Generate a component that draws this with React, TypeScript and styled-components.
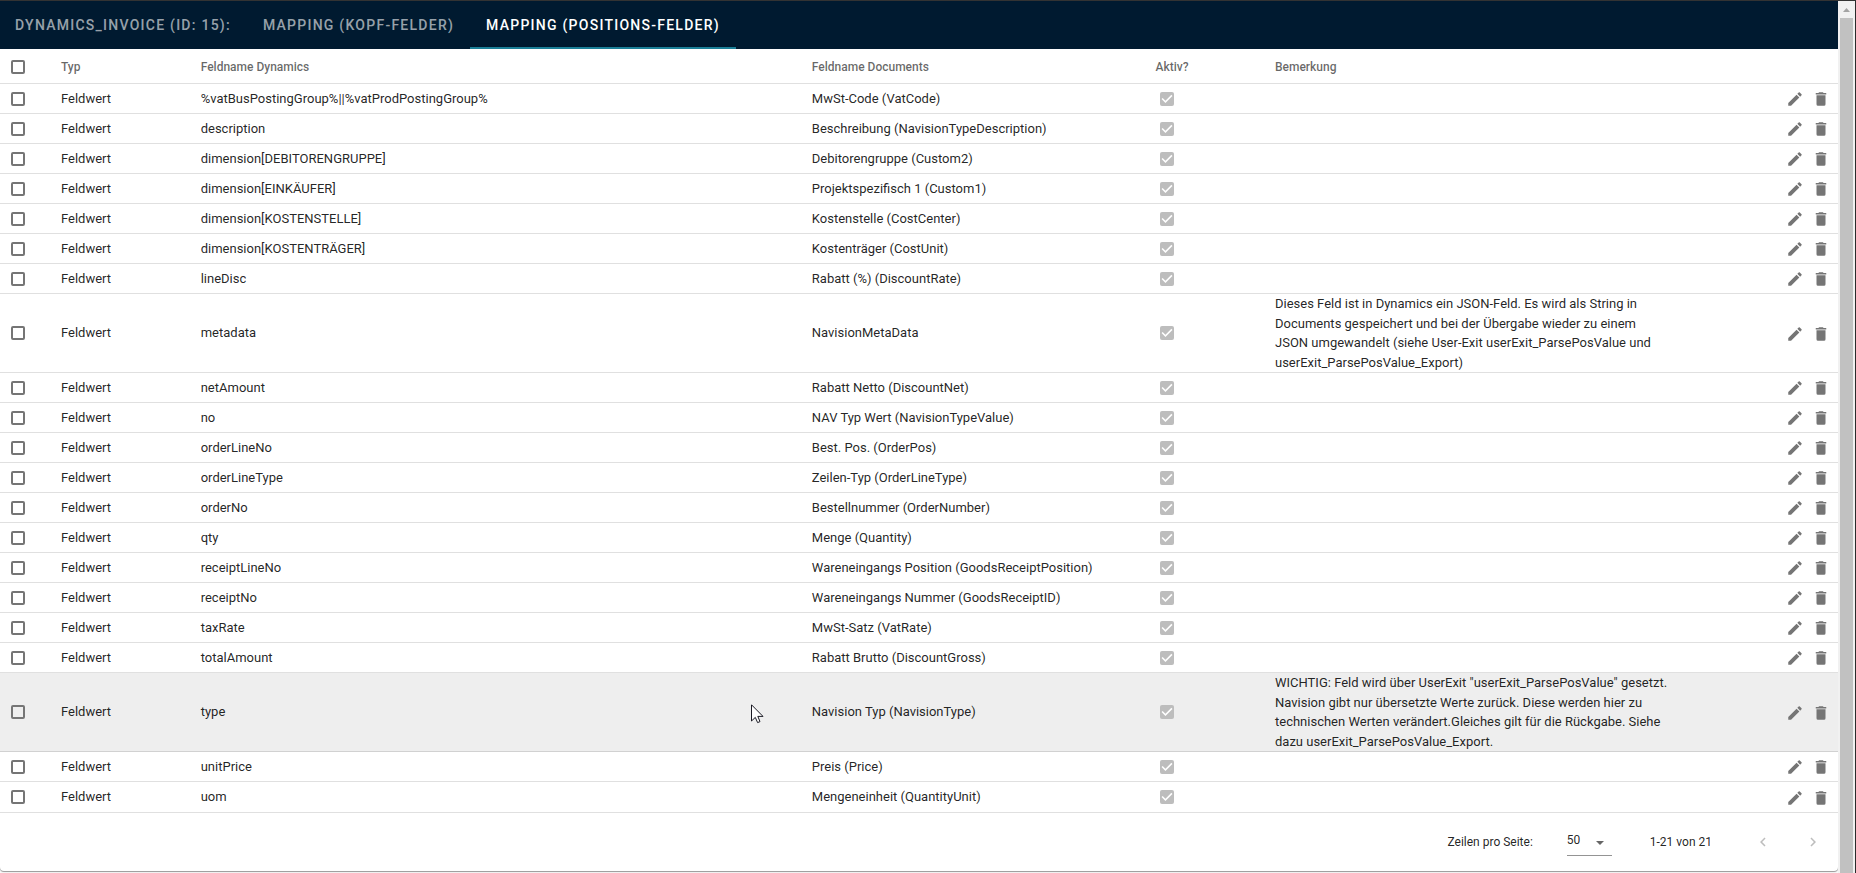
import React from "react";
import styled, { createGlobalStyle } from "styled-components";

const GlobalStyle = createGlobalStyle`
  *, *::before, *::after { box-sizing: border-box; }
  body {
    margin: 0;
    background: #fafafa;
    color: rgba(0, 0, 0, 0.87);
    font-family: Roboto, "Liberation Sans", sans-serif;
    font-size: 13px;
    line-height: 1.5;
  }
`;

const Frame = styled.div`
  display: flex;
  min-height: 100vh;
  border-top: 1px solid #333;
  border-right: 1px solid #2b2b2b;
`;

const Main = styled.main`
  flex: 1;
  min-width: 0;
  padding-bottom: 2px;
`;

const Card = styled.section`
  background: #fff;
  border-radius: 0 0 4px 4px;
  box-shadow: 0 1px 1px rgba(0, 0, 0, 0.4);
`;

const TabBar = styled.nav`
  display: flex;
  height: 48px;
  background: #001a30;
`;

const Tab = styled.button<{ $active?: boolean }>`
  height: 48px;
  padding: 0 16px;
  border: 0;
  background: none;
  box-shadow: ${(p) => (p.$active ? "inset 0 -2px #1b8098" : "none")};
  color: ${(p) => (p.$active ? "#fff" : "rgba(255, 255, 255, 0.6)")};
  font: 500 14px/20px Roboto, "Liberation Sans", sans-serif;
  letter-spacing: 0.0892857em;
  text-transform: uppercase;
  white-space: nowrap;

  &:first-child {
    padding-left: 15px;
  }
`;

const Table = styled.table`
  width: 100%;
  table-layout: fixed;
  border-collapse: separate;
  border-spacing: 0;
`;

const Col = styled.col<{ $width?: string }>`
  width: ${(p) => p.$width ?? "auto"};
`;

const HeadCell = styled.th`
  height: 35px;
  padding: 2px 16px 0;
  border-bottom: 1px solid #e0e0e0;
  color: rgba(0, 0, 0, 0.6);
  font-size: 12px;
  font-weight: 500;
  text-align: left;
`;

const HeadCheckCell = styled(HeadCell)`
  padding: 2px 0 0 11px;
`;

const Row = styled.tr<{ $hovered?: boolean }>`
  background: ${(p) => (p.$hovered ? "#eee" : "transparent")};
`;

const Cell = styled.td`
  position: relative;
  height: 30px;
  padding: 0 16px;
  border-bottom: 1px solid rgba(0, 0, 0, 0.12);

  tr:last-child > & {
    border-bottom: 0;
  }
`;

const CheckCell = styled(Cell)`
  padding: 0 0 0 11px;
`;

const ActiveCell = styled(Cell)`
  padding-left: 20px;
`;

const ActionCell = styled(Cell)`
  padding: 1px 8px 0;
`;

const Actions = styled.div`
  display: flex;
  justify-content: flex-end;
  gap: 8px;
`;

const IconButton = styled.button`
  display: grid;
  place-items: center;
  width: 18px;
  height: 18px;
  padding: 0;
  border: 0;
  background: none;
  color: #757575;

  &:disabled {
    color: #bdbdbd;
  }
`;

const CheckWrap = styled.span`
  display: grid;
  width: 14px;
  height: 14px;

  > * {
    grid-area: 1 / 1;
  }
`;

const CheckInput = styled.input`
  appearance: none;
  width: 14px;
  height: 14px;
  margin: 0;
  border: 2px solid #757575;
  border-radius: 2px;

  &:disabled {
    border-color: #bdbdbd;
    background: #bdbdbd;
  }
`;

const CheckMark = styled.svg`
  width: 14px;
  height: 14px;
  fill: #fff;
  pointer-events: none;
`;

const Pointer = styled.svg`
  position: absolute;
  left: 566px;
  top: 31px;
  width: 13px;
  height: 20px;
`;

const Footer = styled.footer`
  display: flex;
  align-items: center;
  justify-content: flex-end;
  height: 59px;
  padding: 0 16px;
  border-top: 1px solid #e0e0e0;
  font-size: 12px;
`;

const SelectWrap = styled.span`
  position: relative;
  margin: 0 38px 0 34px;
`;

const PageSize = styled.select`
  appearance: none;
  display: block;
  width: 45px;
  height: 28px;
  padding: 0 0 3px;
  border: 0;
  border-bottom: 1px solid #949494;
  border-radius: 0;
  background: none;
  color: inherit;
  font: 400 12px/22px Roboto, "Liberation Sans", sans-serif;
`;

const Caret = styled.svg`
  position: absolute;
  right: 8px;
  top: 13px;
  width: 8px;
  height: 4px;
  fill: #666;
  pointer-events: none;
`;

const Pager = styled.div`
  display: flex;
  gap: 32px;
  margin-left: 42px;
`;

const ScrollTrack = styled.div`
  display: flex;
  flex-direction: column;
  align-items: center;
  width: 17px;
  background: #f1f1f1;
`;

const ScrollArrow = styled.svg`
  width: 17px;
  height: 17px;
  fill: #a3a3a3;
`;

const ScrollThumb = styled.div`
  flex: 1;
  width: 13px;
  background: #c1c1c1;
`;

type Mapping = { dynamics: string; documents: string; note?: string; hovered?: boolean };

const mappings: Mapping[] = [
  { dynamics: "%vatBusPostingGroup%||%vatProdPostingGroup%", documents: "MwSt-Code (VatCode)" },
  { dynamics: "description", documents: "Beschreibung (NavisionTypeDescription)" },
  { dynamics: "dimension[DEBITORENGRUPPE]", documents: "Debitorengruppe (Custom2)" },
  { dynamics: "dimension[EINKÄUFER]", documents: "Projektspezifisch 1 (Custom1)" },
  { dynamics: "dimension[KOSTENSTELLE]", documents: "Kostenstelle (CostCenter)" },
  { dynamics: "dimension[KOSTENTRÄGER]", documents: "Kostenträger (CostUnit)" },
  { dynamics: "lineDisc", documents: "Rabatt (%) (DiscountRate)" },
  {
    dynamics: "metadata",
    documents: "NavisionMetaData",
    note: "Dieses Feld ist in Dynamics ein JSON-Feld. Es wird als String in Documents gespeichert und bei der Übergabe wieder zu einem JSON umgewandelt (siehe User-Exit userExit_ParsePosValue und userExit_ParsePosValue_Export)",
  },
  { dynamics: "netAmount", documents: "Rabatt Netto (DiscountNet)" },
  { dynamics: "no", documents: "NAV Typ Wert (NavisionTypeValue)" },
  { dynamics: "orderLineNo", documents: "Best. Pos. (OrderPos)" },
  { dynamics: "orderLineType", documents: "Zeilen-Typ (OrderLineType)" },
  { dynamics: "orderNo", documents: "Bestellnummer (OrderNumber)" },
  { dynamics: "qty", documents: "Menge (Quantity)" },
  { dynamics: "receiptLineNo", documents: "Wareneingangs Position (GoodsReceiptPosition)" },
  { dynamics: "receiptNo", documents: "Wareneingangs Nummer (GoodsReceiptID)" },
  { dynamics: "taxRate", documents: "MwSt-Satz (VatRate)" },
  { dynamics: "totalAmount", documents: "Rabatt Brutto (DiscountGross)" },
  {
    dynamics: "type",
    documents: "Navision Typ (NavisionType)",
    note: 'WICHTIG: Feld wird über UserExit "userExit_ParsePosValue" gesetzt. Navision gibt nur übersetzte Werte zurück. Diese werden hier zu technischen Werten verändert.Gleiches gilt für die Rückgabe. Siehe dazu userExit_ParsePosValue_Export.',
    hovered: true,
  },
  { dynamics: "unitPrice", documents: "Preis (Price)" },
  { dynamics: "uom", documents: "Mengeneinheit (QuantityUnit)" },
];

const icons = {
  pencil:
    "M20.71,7.04C21.1,6.65 21.1,6 20.71,5.63L18.37,3.29C18,2.9 17.35,2.9 16.96,3.29L15.12,5.12L18.87,8.87M3,17.25V21H6.75L17.81,9.93L14.06,6.18L3,17.25Z",
  trash: "M19,4H15.5L14.5,3H9.5L8.5,4H5V6H19M6,19A2,2 0 0,0 8,21H16A2,2 0 0,0 18,19V7H6V19Z",
  left: "M15.41,16.58L10.83,12L15.41,7.41L14,6L8,12L14,18L15.41,16.58Z",
  right: "M8.59,16.58L13.17,12L8.59,7.41L10,6L16,12L10,18L8.59,16.58Z",
};

function Icon({ name }: { name: keyof typeof icons }) {
  return (
    <svg width="18" height="18" viewBox="0 0 24 24" fill="currentColor" aria-hidden="true">
      <path d={icons[name]} />
    </svg>
  );
}

function Check({ label, active }: { label: string; active?: boolean }) {
  return (
    <CheckWrap>
      <CheckInput type="checkbox" aria-label={label} defaultChecked={active} disabled={active} />
      {active && (
        <CheckMark viewBox="3 3 18 18" aria-hidden="true">
          <path d="M10,17L5,12L6.41,10.58L10,14.17L17.59,6.58L19,8Z" />
        </CheckMark>
      )}
    </CheckWrap>
  );
}

function MappingRow({ dynamics, documents, note, hovered }: Mapping) {
  return (
    <Row $hovered={hovered}>
      <CheckCell>
        <Check label={`${dynamics} auswählen`} />
      </CheckCell>
      <Cell>Feldwert</Cell>
      <Cell>
        {dynamics}
        {hovered && (
          <Pointer viewBox="0 0 13 20" aria-hidden="true">
            <path
              d="M0.5 0.8V17L4.3 13.4L6.6 18.6L9 17.6L6.8 12.4H12Z"
              fill="#fff"
              stroke="#1a1a24"
            />
          </Pointer>
        )}
      </Cell>
      <Cell>{documents}</Cell>
      <ActiveCell>
        <Check label={`${dynamics} aktiv`} active />
      </ActiveCell>
      <Cell>{note}</Cell>
      <ActionCell>
        <Actions>
          <IconButton aria-label="Bearbeiten">
            <Icon name="pencil" />
          </IconButton>
          <IconButton aria-label="Löschen">
            <Icon name="trash" />
          </IconButton>
        </Actions>
      </ActionCell>
    </Row>
  );
}

export default function App() {
  return (
    <>
      <GlobalStyle />
      <Frame>
        <Main>
          <Card>
            <TabBar>
              <Tab>Dynamics_Invoice (ID: 15):</Tab>
              <Tab>Mapping (Kopf-Felder)</Tab>
              <Tab $active>Mapping (Positions-Felder)</Tab>
            </TabBar>
            <Table>
              <colgroup>
                <Col $width="45px" />
                <Col $width="7.6%" />
                <Col $width="33.25%" />
                <Col $width="18.7%" />
                <Col $width="6.5%" />
                <Col $width="23.15%" />
                <Col />
              </colgroup>
              <thead>
                <tr>
                  <HeadCheckCell>
                    <Check label="Alle auswählen" />
                  </HeadCheckCell>
                  <HeadCell>Typ</HeadCell>
                  <HeadCell>Feldname Dynamics</HeadCell>
                  <HeadCell>Feldname Documents</HeadCell>
                  <HeadCell>Aktiv?</HeadCell>
                  <HeadCell>Bemerkung</HeadCell>
                  <HeadCell />
                </tr>
              </thead>
              <tbody>
                {mappings.map((m) => (
                  <MappingRow key={m.dynamics} {...m} />
                ))}
              </tbody>
            </Table>
            <Footer>
              <label htmlFor="page-size">Zeilen pro Seite:</label>
              <SelectWrap>
                <PageSize id="page-size" defaultValue="50">
                  <option>25</option>
                  <option>50</option>
                  <option>100</option>
                </PageSize>
                <Caret viewBox="0 0 8 4" aria-hidden="true">
                  <path d="M0 0H8L4 4Z" />
                </Caret>
              </SelectWrap>
              <span>1-21 von 21</span>
              <Pager>
                <IconButton disabled aria-label="Vorherige Seite">
                  <Icon name="left" />
                </IconButton>
                <IconButton disabled aria-label="Nächste Seite">
                  <Icon name="right" />
                </IconButton>
              </Pager>
            </Footer>
          </Card>
        </Main>
        <ScrollTrack aria-hidden="true">
          <ScrollArrow viewBox="0 0 17 17">
            <path d="M5 11L8.5 7L12 11Z" />
          </ScrollArrow>
          <ScrollThumb />
        </ScrollTrack>
      </Frame>
    </>
  );
}
